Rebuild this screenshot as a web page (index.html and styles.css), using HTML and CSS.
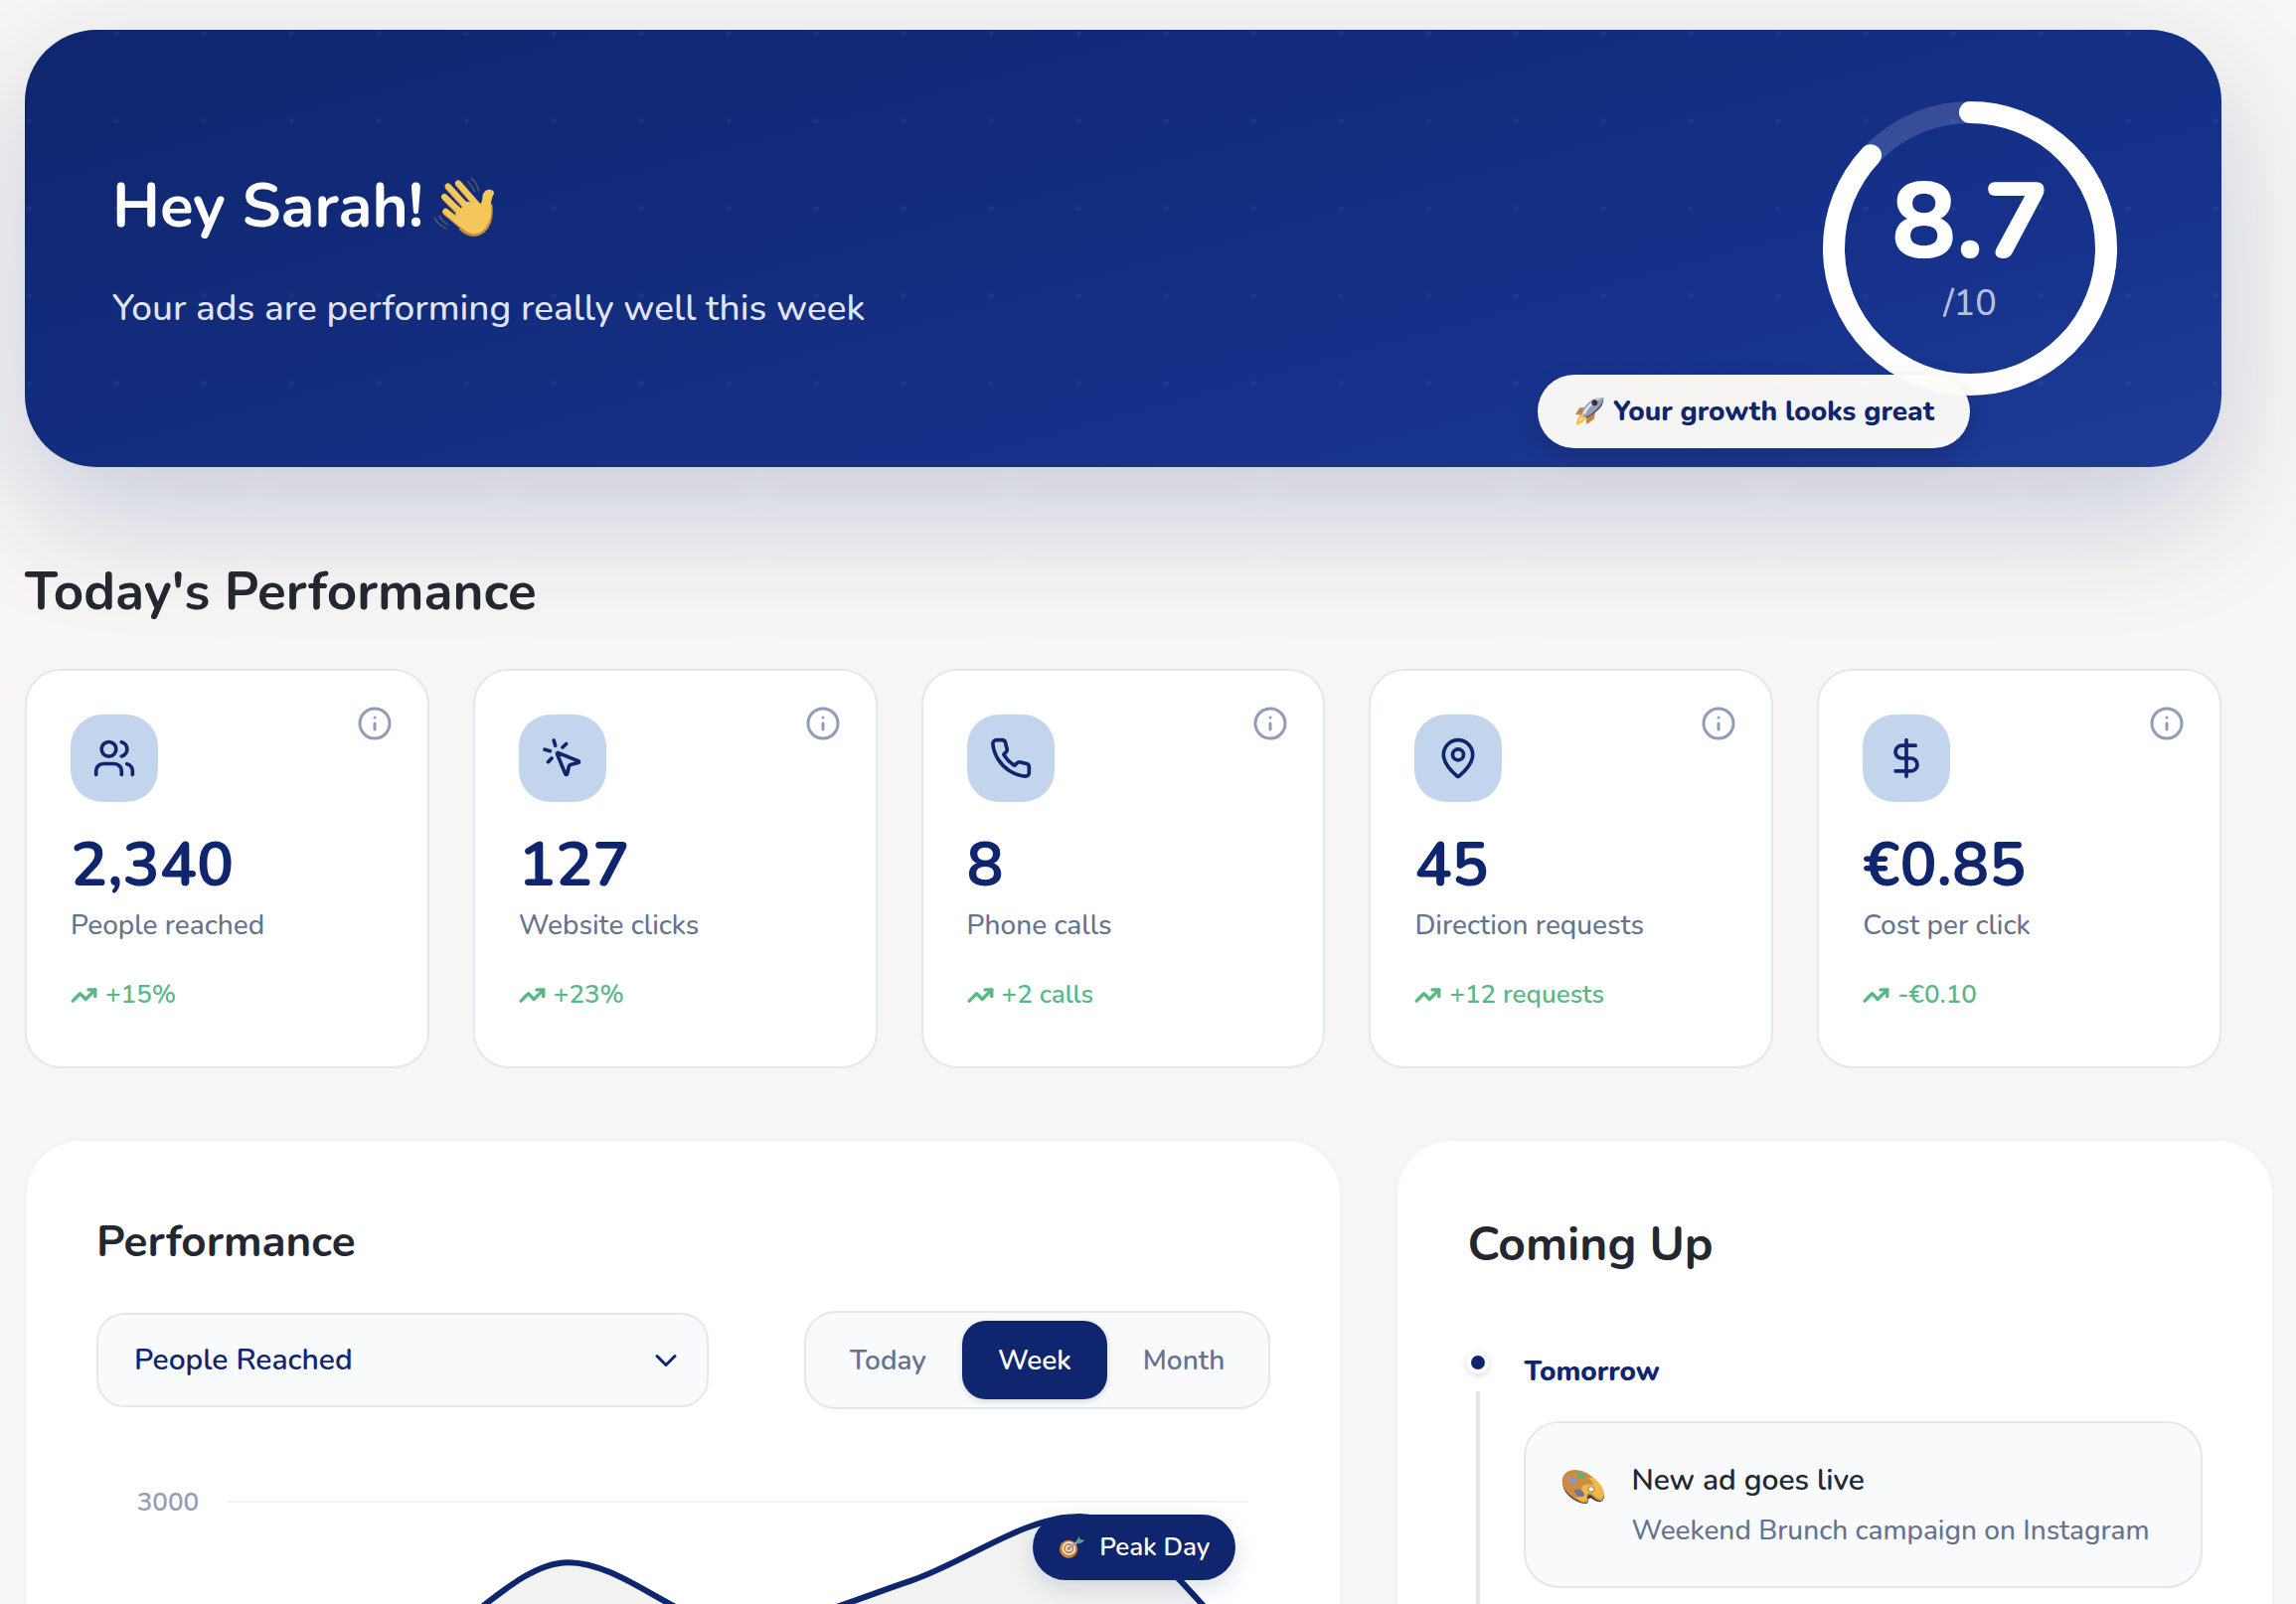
FILE: index.html
```html
<!DOCTYPE html>
<html lang="en">
<head>
<meta charset="utf-8">
<title>Dashboard</title>
<meta name="viewport" content="width=device-width, initial-scale=1">
<link rel="stylesheet" href="styles.css">
</head>
<body>
<svg class="sprite" aria-hidden="true">
  <symbol id="i-info" viewBox="0 0 24 24"><circle cx="12" cy="12" r="10"/><path d="M12 16v-4M12 8h.01"/></symbol>
  <symbol id="i-up" viewBox="0 0 24 24"><path d="M16 7h6v6"/><path d="m22 7-8.5 8.5-5-5L2 17"/></symbol>
</svg>
<main class="page">
  <section class="hero">
    <div class="hero-text">
      <h1 class="hero-title">Hey Sarah!
        <svg class="wave" viewBox="96 40 198 192" role="img" aria-label="Waving hand">
          <g fill="none" stroke="#5d5a60" stroke-width="4" stroke-linecap="round"><path d="M217 50q16 14 22 38M206 60q14 12 20 30M120 164q8 16 26 26M106 170q10 20 34 32"/></g>
          <g fill="none" stroke="#c98b3c" stroke-linecap="round" stroke-width="20"><path d="M148 78l70 78M179 69l62 72M138 109l62 66M140 153l60 50"/></g>
          <path fill="#c98b3c" d="M180 205q22 22 46 21 36-4 50-42 8-24 4-56L200 150z"/>
          <g fill="none" stroke="#f4c75c" stroke-linecap="round" stroke-width="18"><path d="M146 74l70 76M177 65l62 70M135 106l66 62M139 150l60 48"/></g>
          <path fill="#f4c75c" d="M205 120l36 8q9-3 9-20 1-20 18-24 17-1 17 12-8 14-9 28 4 24-2 46-8 34-36 46-24 6-44-12l-16-16-10-30z"/>
        </svg>
      </h1>
      <p class="hero-sub">Your ads are performing really well this week</p>
    </div>
    <div class="score">
      <svg class="ring" viewBox="0 0 296 296" aria-hidden="true">
        <circle class="ring-track" cx="148" cy="148" r="137"/>
        <circle class="ring-value" cx="148" cy="148" r="137" pathLength="100" stroke-dasharray="87 100" transform="rotate(-90 148 148)"/>
      </svg>
      <div class="score-text"><strong class="score-num">8.7</strong><span class="score-max">/10</span></div>
      <div class="growth">
        <svg class="rocket" viewBox="134 84 94 90" role="img" aria-label="Rocket">
          <path fill="#cb8440" d="M168 117l-16 1-13 20 20 2zM199 132l-4 20-22 16-3-22z"/>
          <path fill="#f3b83c" d="M156 138q-14 12-14 32 22-4 28-22z"/>
          <path fill="#f9dc82" d="M158 144q-8 8-10 18 12-4 16-12z"/>
          <path fill="#4d5670" d="M224 88q2 24-22 42-16 14-28 18l-12-6z"/>
          <path fill="#93a0ba" d="M224 87q-2 20-22 36-18 18-32 22l-12-8q2-16 16-30 20-22 50-20z"/>
          <path fill="#e1e5ee" d="M222 88q-26 0-42 20-14 14-20 28l8 2q10-20 22-30 14-14 32-20z"/>
          <circle cx="197" cy="103" r="9" fill="#3a3230"/>
        </svg>
        <span>Your growth looks great</span>
      </div>
    </div>
  </section>

  <section class="today">
    <h2 class="section-title">Today's Performance</h2>
    <div class="metrics">
      <article class="metric">
        <button class="info" type="button" aria-label="About people reached"><svg class="line"><use href="#i-info"/></svg></button>
        <span class="tile"><svg class="line" viewBox="0 0 24 24"><path d="M16 21v-2a4 4 0 0 0-4-4H6a4 4 0 0 0-4 4v2"/><circle cx="9" cy="7" r="4"/><path d="M22 21v-2a4 4 0 0 0-3-3.87M16 3.13a4 4 0 0 1 0 7.75"/></svg></span>
        <p class="value">2,340</p><p class="label">People reached</p>
        <p class="trend"><svg class="line"><use href="#i-up"/></svg>+15%</p>
      </article>
      <article class="metric">
        <button class="info" type="button" aria-label="About website clicks"><svg class="line"><use href="#i-info"/></svg></button>
        <span class="tile"><svg class="line" viewBox="0 0 24 24"><path d="M14 4.1 12 6M5.1 8l-2.9-.8M6 12l-1.9 2M7.2 2.2 8 5.1"/><path d="M9.037 9.69a.498.498 0 0 1 .653-.653l11 4.5a.5.5 0 0 1-.074.949l-4.349 1.041a1 1 0 0 0-.74.739l-1.04 4.35a.5.5 0 0 1-.95.074z"/></svg></span>
        <p class="value">127</p><p class="label">Website clicks</p>
        <p class="trend"><svg class="line"><use href="#i-up"/></svg>+23%</p>
      </article>
      <article class="metric">
        <button class="info" type="button" aria-label="About phone calls"><svg class="line"><use href="#i-info"/></svg></button>
        <span class="tile"><svg class="line" viewBox="0 0 24 24"><path d="M22 16.92v3a2 2 0 0 1-2.18 2 19.79 19.79 0 0 1-8.63-3.07 19.5 19.5 0 0 1-6-6 19.79 19.79 0 0 1-3.07-8.67A2 2 0 0 1 4.11 2h3a2 2 0 0 1 2 1.72 12.84 12.84 0 0 0 .7 2.81 2 2 0 0 1-.45 2.11L8.09 9.91a16 16 0 0 0 6 6l1.27-1.27a2 2 0 0 1 2.11-.45 12.84 12.84 0 0 0 2.81.7A2 2 0 0 1 22 16.92z"/></svg></span>
        <p class="value">8</p><p class="label">Phone calls</p>
        <p class="trend"><svg class="line"><use href="#i-up"/></svg>+2 calls</p>
      </article>
      <article class="metric">
        <button class="info" type="button" aria-label="About direction requests"><svg class="line"><use href="#i-info"/></svg></button>
        <span class="tile"><svg class="line" viewBox="0 0 24 24"><path d="M20 10c0 4.993-5.539 10.193-7.399 11.799a1 1 0 0 1-1.202 0C9.539 20.193 4 14.993 4 10a8 8 0 0 1 16 0"/><circle cx="12" cy="10" r="3"/></svg></span>
        <p class="value">45</p><p class="label">Direction requests</p>
        <p class="trend"><svg class="line"><use href="#i-up"/></svg>+12 requests</p>
      </article>
      <article class="metric">
        <button class="info" type="button" aria-label="About cost per click"><svg class="line"><use href="#i-info"/></svg></button>
        <span class="tile"><svg class="line" viewBox="0 0 24 24"><path d="M12 2v20M17 5H9.5a3.5 3.5 0 0 0 0 7h5a3.5 3.5 0 0 1 0 7H6"/></svg></span>
        <p class="value">€0.85</p><p class="label">Cost per click</p>
        <p class="trend"><svg class="line"><use href="#i-up"/></svg>-€0.10</p>
      </article>
    </div>
  </section>

  <div class="panels">
    <section class="panel">
      <h2 class="panel-title">Performance</h2>
      <div class="controls">
        <div class="select-wrap">
          <select class="select" aria-label="Metric">
            <option>People Reached</option><option>Website Clicks</option><option>Phone Calls</option>
          </select>
          <svg class="line chevron" viewBox="0 0 24 24" aria-hidden="true"><path d="m6 9 6 6 6-6"/></svg>
        </div>
        <div class="segments">
          <button class="segment" type="button">Today</button>
          <button class="segment active" type="button">Week</button>
          <button class="segment" type="button">Month</button>
        </div>
      </div>
      <div class="chart">
        <svg class="chart-svg" viewBox="0 0 1180 300" role="img" aria-label="People reached this week">
          <path class="grid" d="M132 54H1157"/>
          <text class="axis" x="103" y="63" text-anchor="end">3000</text>
          <path class="area" d="M132 240C189 240 246 216 303 208 360 201 417 115 474 115 531 115 588 180 645 180 702 180 760 153 817 134 874 115 931 69 988 69 1045 69 1100 149 1157 207V300H132z"/>
          <path class="curve" d="M132 240C189 240 246 216 303 208 360 201 417 115 474 115 531 115 588 180 645 180 702 180 760 153 817 134 874 115 931 69 988 69 1045 69 1100 149 1157 207"/>
        </svg>
        <div class="peak">
          <svg class="target" viewBox="44 88 84 76" role="img" aria-label="Target">
            <circle cx="76" cy="133" r="27" fill="#5e3c22"/><circle cx="74" cy="131" r="27" fill="#cb8440"/>
            <circle cx="75" cy="129" r="18" fill="none" stroke="#f6ece0" stroke-width="5"/><circle cx="75" cy="129" r="8" fill="none" stroke="#f6ece0" stroke-width="4"/>
            <path d="M77 127 104 108" stroke="#8f9fc4" stroke-width="7" stroke-linecap="round"/><path d="m98 106 8-13 3 9 14 2-10 9-13 2z" fill="#5f9a8c"/>
          </svg>
          <span>Peak Day</span>
        </div>
      </div>
    </section>

    <section class="panel">
      <h2 class="panel-title large">Coming Up</h2>
      <div class="timeline">
        <div class="rail"><span class="dot"></span><span class="rail-line"></span></div>
        <div class="day">
          <h3 class="day-title">Tomorrow</h3>
          <article class="event">
            <svg class="palette" viewBox="303 395 134 109" role="img" aria-label="Palette">
              <path fill="#3c3a45" d="M306 440q4 30 36 50 24 14 38 11 8-4 5-14l8-3q18 14 30 12 10-4 11-18l-30-20z"/>
              <path fill="#d08b40" d="M305 430q2-24 26-31 34-6 66 20 34 26 37 54-1 18-12 20-12-1-22-13-6-6-13-5-7 4-3 12 4 10-4 12-14 2-38-14-38-24-37-55z"/>
              <path fill="#f0b94a" d="M386 422q12-4 24 8 20 20 22 42-3 14-10 16-12-3-22-14-8-8-16-5-6 4-4 13 3 8-2 12-14 1-32-12 24 4 20-18-6-22 20-22 12 2 16-2z"/>
              <path fill="#55b484" d="M352 408q10-6 20 4 4 10-4 14-10 0-15-8z"/>
              <path fill="#8c9ab6" d="M322 420q12-4 22 4 8 8 6 18-8 4-20-4-8-8-8-18z"/>
              <path fill="#6b7894" d="M342 460q10-6 22 0 10 8 9 18-10 4-22-2-8-6-9-16z"/>
              <ellipse cx="394" cy="457" rx="9" ry="8" fill="#fff" stroke="#5a4632" stroke-width="2"/>
            </svg>
            <div><h4 class="event-title">New ad goes live</h4><p class="event-sub">Weekend Brunch campaign on Instagram</p></div>
          </article>
        </div>
      </div>
    </section>
  </div>
</main>
</body>
</html>
```
FILE: styles.css
```css
:root {
  --navy: #0f256e;
  --ink: #232830;
  --slate: #66738f;
  --mist: #919db6;
  --line: #e4e7eb;
  --soft: #f9fafc;
}
* { box-sizing: border-box; }
body, h1, h2, h3, h4, p { margin: 0; }
body {
  background: #f7f6f4;
  color: var(--ink);
  font-family: "Nunito", "Lato", sans-serif;
  font-size: 28px;
  font-weight: 500;
  line-height: 40px;
}
button, select { font: inherit; }
svg { flex: none; }
.sprite { position: absolute; width: 0; height: 0; }
.line { fill: none; stroke: currentColor; stroke-width: 2; stroke-linecap: round; stroke-linejoin: round; }
.page { height: 100vh; overflow: hidden; padding: 30px 22px 0 25px; }

.hero {
  display: flex;
  align-items: center;
  justify-content: space-between;
  min-height: 440px;
  margin-right: 53px;
  padding: 72px 105px 72px 88px;
  border-radius: 72px;
  color: #fff;
  background:
    radial-gradient(circle at 4px 4px, rgba(90, 130, 220, .12) 2px, transparent 3px) 0 0 / 88px 88px,
    linear-gradient(165deg, #0f266d 0%, #15318a 70%, #1e3c96 100%);
  box-shadow: 0 48px 128px rgba(15, 37, 120, .2);
}
.hero-text { display: grid; gap: 32px; }
.hero-title { display: flex; align-items: center; gap: 8px; font-size: 62px; line-height: 88px; font-weight: 700; }
.wave { width: 66px; height: 64px; }
.hero-sub { font-size: 37px; line-height: 52px; color: rgba(255, 255, 255, .9); }
.score { position: relative; width: 296px; height: 296px; }
.ring { display: block; width: 100%; height: 100%; }
.ring-track, .ring-value { fill: none; stroke-width: 22; }
.ring-track { stroke: rgba(255, 255, 255, .15); }
.ring-value { stroke: #fff; stroke-linecap: round; }
.score-text { position: absolute; inset: 0; display: flex; flex-direction: column; align-items: center; justify-content: center; }
.score-num { font-size: 108px; line-height: 112px; font-weight: 800; }
.score-max { font-size: 36px; line-height: 52px; color: rgba(255, 255, 255, .7); }
.growth {
  position: absolute;
  right: 50%;
  top: 275px;
  display: flex;
  align-items: center;
  gap: 8px;
  height: 74px;
  padding: 0 36px;
  border-radius: 37px;
  background: rgba(254, 252, 248, .97);
  box-shadow: 0 8px 24px rgba(0, 0, 0, .15);
  color: var(--navy);
  font-weight: 800;
  white-space: nowrap;
}
.rocket { width: 32px; height: 30px; }

.today { margin: 94px 53px 0 0; }
.section-title { font-size: 53px; line-height: 64px; font-weight: 700; }
.metrics { display: grid; grid-template-columns: repeat(5, 1fr); gap: 44px; margin-top: 45px; }
.metric {
  position: relative;
  padding: 44px 44px 52px;
  border: 2px solid var(--line);
  border-radius: 36px;
  background: #fff;
}
.info { position: absolute; top: 35px; right: 35px; display: flex; padding: 0; border: 0; background: none; color: var(--mist); }
.info svg { width: 36px; height: 36px; }
.tile { display: grid; place-items: center; width: 88px; height: 88px; border-radius: 32px; background: #c2d5ed; color: var(--navy); }
.tile svg { width: 44px; height: 44px; }
.value { margin-top: 32px; font-size: 62px; line-height: 64px; font-weight: 700; color: var(--navy); }
.label { margin-top: 8px; color: var(--slate); }
.trend { display: flex; align-items: center; gap: 8px; margin-top: 30px; font-size: 26px; font-weight: 600; color: #5ab887; }
.trend svg { width: 27px; height: 27px; stroke-width: 3; }

.panels { display: grid; grid-template-columns: 3fr 2fr; gap: 54px; margin-top: 71px; }
.panel {
  min-width: 0;
  padding: 70px;
  border: 2px solid #f3f3f1;
  border-radius: 56px;
  background: #fff;
  box-shadow: 0 2px 8px rgba(0, 0, 0, .02);
}
.panel-title { font-size: 44px; line-height: 64px; font-weight: 700; }
.panel-title.large { font-size: 48px; line-height: 68px; }
.controls { display: flex; align-items: center; justify-content: space-between; gap: 40px; margin-top: 37px; }
.select-wrap { position: relative; flex: 0 1 616px; }
.select {
  display: block;
  width: 100%;
  height: 95px;
  padding: 0 80px 0 36px;
  border: 2px solid var(--line);
  border-radius: 28px;
  appearance: none;
  background: var(--soft);
  color: var(--navy);
  font-size: 30px;
  font-weight: 600;
}
.chevron { position: absolute; right: 25px; top: 30px; width: 36px; height: 36px; color: var(--navy); pointer-events: none; }
.segments { display: flex; padding: 8px; border: 2px solid var(--line); border-radius: 32px; background: var(--soft); }
.segment { height: 79px; padding: 0 36px; border: 0; border-radius: 24px; background: none; color: var(--slate); font-weight: 600; }
.segment.active { background: var(--navy); color: #fff; box-shadow: 0 2px 6px rgba(0, 0, 0, .15); }
.chart { position: relative; margin-top: 39px; }
.chart-svg { display: block; width: 100%; }
.grid { stroke: #f2f2f2; stroke-width: 2; }
.axis { fill: var(--mist); font-size: 26px; font-weight: 600; }
.area { fill: #f2f2f1; }
.curve { fill: none; stroke: var(--navy); stroke-width: 6; }
.peak {
  position: absolute;
  right: 35px;
  top: 67px;
  display: flex;
  align-items: center;
  gap: 13px;
  height: 66px;
  padding: 0 26px;
  border-radius: 33px;
  background: var(--navy);
  box-shadow: 0 8px 24px rgba(15, 37, 110, .15);
  color: #fff;
  font-size: 26px;
  font-weight: 600;
  white-space: nowrap;
}
.target { width: 28px; height: 26px; }

.timeline { display: grid; grid-template-columns: 22px 1fr; gap: 35px; margin-top: 74px; }
.rail { display: flex; flex-direction: column; align-items: center; gap: 18px; min-height: 320px; }
.dot { width: 22px; height: 22px; border: 4px solid #fff; border-radius: 50%; background: var(--navy); box-shadow: 0 2px 8px rgba(0, 0, 0, .15); }
.rail-line { flex: 1; width: 4px; background: #e2e5e9; }
.day-title { font-size: 28px; font-weight: 800; color: var(--navy); }
.event {
  display: flex;
  align-items: flex-start;
  gap: 26px;
  margin-top: 30px;
  padding: 36px;
  border: 2px solid var(--line);
  border-radius: 36px;
  background: var(--soft);
}
.palette { width: 44px; height: 36px; margin-top: 10px; }
.event-title { font-size: 30px; line-height: 44px; font-weight: 600; }
.event-sub { margin-top: 8px; color: var(--slate); }
```
